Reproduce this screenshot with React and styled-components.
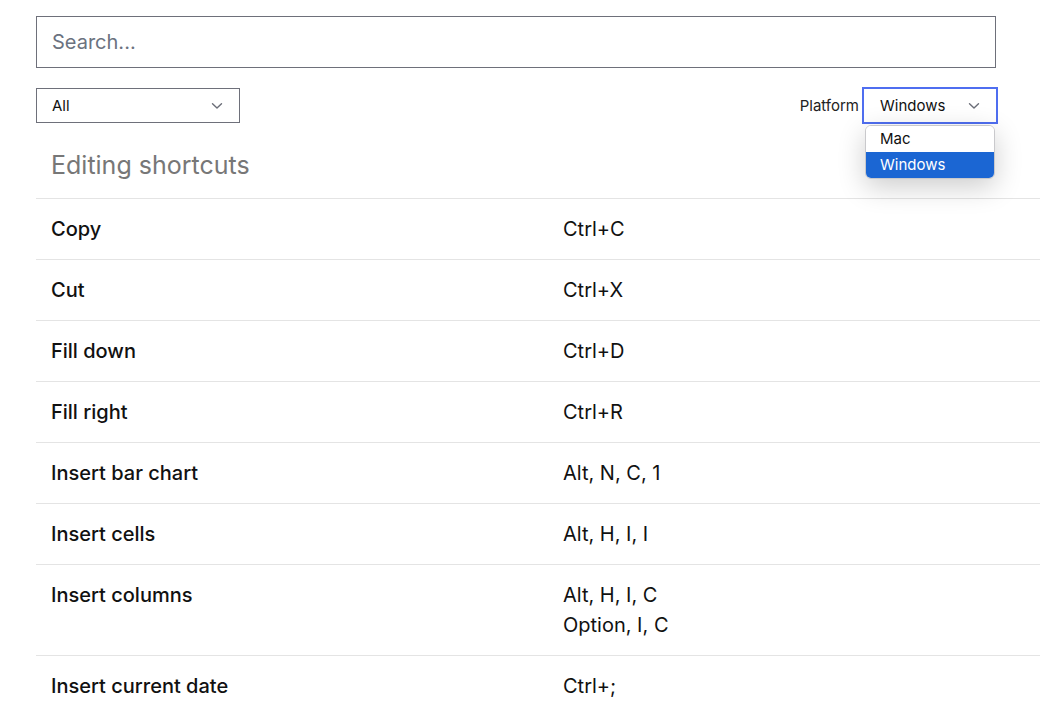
import React, { useState } from "react";
import styled, { createGlobalStyle } from "styled-components";

const GlobalStyle = createGlobalStyle`
  html, body {
    margin: 0;
    padding: 0;
    background: #ffffff;
    overflow: hidden;
  }
  body {
    font-family: Inter, "Noto Sans", sans-serif;
    color: #111;
  }
  * {
    box-sizing: border-box;
  }
`;

const Page = styled.div`
  padding: 16px 0 0 36px;
  width: 1040px;
  height: 707px;
  overflow: hidden;
`;

const SearchInput = styled.input`
  display: block;
  width: 960px;
  height: 52px;
  border: 1px solid #6e707a;
  border-radius: 0;
  padding: 0 15px;
  font-family: inherit;
  font-size: 20px;
  color: #111;
  outline: none;

  &::placeholder {
    color: #6b7280;
  }
`;

const Toolbar = styled.div`
  display: flex;
  align-items: center;
  justify-content: space-between;
  width: 961px;
  margin-top: 20px;
`;

const PlatformGroup = styled.div`
  display: flex;
  align-items: center;
  gap: 4px;
  position: relative;
`;

const Label = styled.span`
  font-size: 15px;
  color: #222;
`;

const SelectWrap = styled.div`
  position: relative;
  flex-shrink: 0;
`;

const SelectBox = styled.div`
  display: flex;
  align-items: center;
  justify-content: space-between;
  flex-shrink: 0;
  width: ${(p) => p.width}px;
  height: 35px;
  padding: 0 16px 0 ${(p) => (p.focused ? 16 : 15)}px;
  border: 1px solid ${(p) => (p.focused ? "#4f6ef0" : "#6e707a")};
  outline: ${(p) => (p.focused ? "1px solid #4f6ef0" : "none")};
  font-size: 15px;
  color: #111;
  background: #fff;
  cursor: pointer;
`;

const Chevron = () => (
  <svg width="12" height="8" viewBox="0 0 12 8" fill="none">
    <path d="M1.5 1.8 L6 6 L10.5 1.8" stroke="#6b6e78" strokeWidth="1.4" strokeLinecap="round" strokeLinejoin="round" />
  </svg>
);

const Menu = styled.ul`
  position: absolute;
  top: 37px;
  left: 2px;
  width: 130px;
  margin: 0;
  padding: 0;
  list-style: none;
  background: #fff;
  border: 1px solid #c9c9cc;
  border-radius: 6px;
  overflow: hidden;
  box-shadow: 0 8px 28px rgba(0, 0, 0, 0.2);
  z-index: 10;
`;

const MenuItem = styled.li`
  height: 26px;
  line-height: 26px;
  padding-left: 14px;
  font-size: 15px;
  color: ${(p) => (p.active ? "#fff" : "#111")};
  background: ${(p) => (p.active ? "#1b66d3" : "#fff")};
`;

const Heading = styled.h2`
  margin: 0;
  padding: 25px 0 16px 15px;
  font-size: 25px;
  line-height: 34px;
  font-weight: 400;
  color: #777777;
`;

const Table = styled.div`
  width: 1024px;
  border-top: 1px solid #e4e4e4;
`;

const Row = styled.div`
  display: grid;
  grid-template-columns: 512px 1fr;
  border-bottom: 1px solid #e4e4e4;
`;

const Cell = styled.div`
  padding: 15px;
  font-size: 20px;
  line-height: 30px;
  font-weight: ${(p) => (p.bold ? 500 : 400)};
  color: #111;
`;

const shortcuts = [
  { name: "Copy", keys: ["Ctrl+C"] },
  { name: "Cut", keys: ["Ctrl+X"] },
  { name: "Fill down", keys: ["Ctrl+D"] },
  { name: "Fill right", keys: ["Ctrl+R"] },
  { name: "Insert bar chart", keys: ["Alt, N, C, 1"] },
  { name: "Insert cells", keys: ["Alt, H, I, I"] },
  { name: "Insert columns", keys: ["Alt, H, I, C", "Option, I, C"] },
  { name: "Insert current date", keys: ["Ctrl+;"] },
];

const App = () => {
  const [platform] = useState("Windows");

  return (
    <Page>
      <GlobalStyle />
      <SearchInput placeholder="Search..." />

      <Toolbar>
        <SelectBox width={204}>
          <span>All</span>
          <Chevron />
        </SelectBox>

        <PlatformGroup>
          <Label>Platform</Label>
          <SelectWrap>
            <SelectBox width={134} focused>
              <span>{platform}</span>
              <Chevron />
            </SelectBox>
            <Menu>
              <MenuItem>Mac</MenuItem>
              <MenuItem active>Windows</MenuItem>
            </Menu>
          </SelectWrap>
        </PlatformGroup>
      </Toolbar>

      <Heading>Editing shortcuts</Heading>

      <Table>
        {shortcuts.map((s) => (
          <Row key={s.name}>
            <Cell bold>{s.name}</Cell>
            <Cell>
              {s.keys.map((k) => (
                <div key={k}>{k}</div>
              ))}
            </Cell>
          </Row>
        ))}
      </Table>
    </Page>
  );
};

export default App;
